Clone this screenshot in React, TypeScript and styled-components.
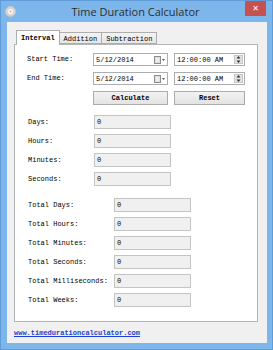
import React from "react";
import styled, { createGlobalStyle } from "styled-components";

const GlobalStyle = createGlobalStyle`
  html, body {
    margin: 0;
    padding: 0;
    width: 273px;
    height: 350px;
    overflow: hidden;
  }
  * { box-sizing: border-box; }
`;

const MONO = `"Liberation Mono", "DejaVu Sans Mono", monospace`;

const durations = ["Days", "Hours", "Minutes", "Seconds"];
const totals = [
  "Total Days",
  "Total Hours",
  "Total Minutes",
  "Total Seconds",
  "Total Milliseconds",
  "Total Weeks",
];

const CalendarIcon = () => (
  <svg width="12" height="8" viewBox="0 0 12 8">
    <rect x="0.5" y="0.5" width="6" height="7" fill="#d8d8d8" stroke="#8c8c8c" />
    <rect x="1.5" y="1.5" width="4" height="5" fill="#ececec" />
    <path d="M8 3 L11 3 L9.5 5 Z" fill="#555" />
  </svg>
);

const SpinIcon = () => (
  <svg width="5" height="9" viewBox="0 0 5 9">
    <path d="M0.5 3.5 L4.5 3.5 L2.5 1 Z" fill="#333" />
    <path d="M0.5 5.5 L4.5 5.5 L2.5 8 Z" fill="#333" />
  </svg>
);

const AppIcon = () => (
  <svg width="11" height="11" viewBox="0 0 11 11">
    <circle cx="5.5" cy="5.5" r="5" fill="#d6d6d6" stroke="#c4c4c4" />
    <circle cx="5.5" cy="5.5" r="2.6" fill="#f6f6f6" />
    <circle cx="5.5" cy="5.5" r="1" fill="#e4a0a0" />
  </svg>
);

const DateTimeRow = ({ label }: { label: string }) => (
  <>
    <Label>{label}</Label>
    <EditBox>
      <span>5/12/2014</span>
      <CalendarIcon />
    </EditBox>
    <EditBox>
      <span>12:00:00 AM</span>
      <Spinner>
        <SpinIcon />
      </Spinner>
    </EditBox>
  </>
);

const App = () => {
  return (
    <Window>
      <GlobalStyle />
      <TitleBar>
        <IconSlot>
          <AppIcon />
        </IconSlot>
        <Title>Time Duration Calculator</Title>
        <CloseButton>✕</CloseButton>
      </TitleBar>
      <Frame>
        <Client>
          <Tabs>
            <TabStrip>
              <Tab $active>Interval</Tab>
              <Tab>Addition</Tab>
              <Tab>Subtraction</Tab>
            </TabStrip>
            <Panel>
              <TopGrid>
                <DateTimeRow label="Start Time:" />
                <DateTimeRow label="End Time:" />
                <span />
                <Button>Calculate</Button>
                <Button>Reset</Button>
              </TopGrid>

              <ResultGrid $labelWidth={66} $top={11}>
                {durations.map((d) => (
                  <React.Fragment key={d}>
                    <Label>{d}:</Label>
                    <ValueBox>0</ValueBox>
                  </React.Fragment>
                ))}
              </ResultGrid>

              <ResultGrid $labelWidth={86} $top={12}>
                {totals.map((t) => (
                  <React.Fragment key={t}>
                    <Label>{t}:</Label>
                    <ValueBox>0</ValueBox>
                  </React.Fragment>
                ))}
              </ResultGrid>
            </Panel>
          </Tabs>
          <SiteLink href="#">www.timedurationcalculator.com</SiteLink>
        </Client>
      </Frame>
    </Window>
  );
};
export default App;

// styled-components -----------------
const Window = styled.div`
  width: 273px;
  height: 350px;
  background: #7db6ea;
  display: flex;
  flex-direction: column;
  border: 1px solid #5f9bd6;
`;

const TitleBar = styled.div`
  height: 21px;
  display: grid;
  grid-template-columns: 1fr auto 1fr;
  align-items: center;
  padding: 0 6px 0 4px;
`;

const IconSlot = styled.div`
  display: flex;
  align-items: center;
`;

const Title = styled.div`
  font-family: "Open Sans", "Liberation Sans", sans-serif;
  font-size: 11px;
  color: #2e2e2e;
  padding-bottom: 1px;
`;

const CloseButton = styled.div`
  justify-self: end;
  align-self: start;
  width: 21px;
  height: 15px;
  background: #c7514f;
  color: #fff;
  font-family: "DejaVu Sans", sans-serif;
  font-size: 8px;
  font-weight: bold;
  display: flex;
  align-items: center;
  justify-content: center;
`;

const Frame = styled.div`
  flex: 1;
  display: flex;
  padding: 0 5px 6px 6px;
`;

const Client = styled.div`
  flex: 1;
  background: #f0f0f0;
  padding: 8px 0 0 7px;
  display: flex;
  flex-direction: column;
  font-family: ${MONO};
  font-size: 7px;
  color: #000;
`;

const Tabs = styled.div`
  width: 244px;
  display: flex;
  flex-direction: column;
`;

const TabStrip = styled.div`
  display: flex;
  align-items: flex-end;
  height: 14px;
  padding-left: 2px;
`;

const Tab = styled.div<{ $active?: boolean }>`
  position: relative;
  z-index: ${(p) => (p.$active ? 2 : 1)};
  height: ${(p) => (p.$active ? "15px" : "12px")};
  margin-bottom: ${(p) => (p.$active ? "-1px" : "0")};
  margin-left: ${(p) => (p.$active ? "0" : "-1px")};
  padding: 0 4px;
  display: flex;
  align-items: center;
  padding-top: ${(p) => (p.$active ? "0" : "1px")};
  border: 1px solid #adadad;
  border-bottom: ${(p) => (p.$active ? "none" : "1px solid #adadad")};
  background: ${(p) =>
    p.$active ? "#fff" : "linear-gradient(#f3f3f3, #e6e6e6)"};
  font-weight: ${(p) => (p.$active ? "bold" : "normal")};
`;

const Panel = styled.div`
  height: 278px;
  background: #fff;
  border: 1px solid #b4b4b4;
  padding: 8px 0 0 12px;
`;

const TopGrid = styled.div`
  display: grid;
  grid-template-columns: 60px 75px 71px;
  grid-auto-rows: 13px;
  column-gap: 6px;
  row-gap: 6px;
  align-items: center;
  & > :nth-child(n + 8) {
    margin-top: 1px;
  }
`;

const Label = styled.div`
  white-space: nowrap;
  line-height: 13px;
`;

const EditBox = styled.div`
  height: 13px;
  border: 1px solid #abadb3;
  background: #fff;
  display: flex;
  align-items: center;
  justify-content: space-between;
  padding: 0 1px 0 2px;
  white-space: nowrap;
`;

const Spinner = styled.div`
  width: 9px;
  height: 9px;
  background: #e4e4e4;
  border: 1px solid #c6c6c6;
  display: flex;
  align-items: center;
  justify-content: center;
`;

const Button = styled.div`
  height: 14px;
  border: 1px solid #acacac;
  background: linear-gradient(#f2f2f2, #e3e3e3);
  display: flex;
  align-items: center;
  justify-content: center;
  font-weight: bold;
`;

const ResultGrid = styled.div<{ $labelWidth: number; $top: number }>`
  margin-top: ${(p) => p.$top}px;
  display: grid;
  grid-template-columns: ${(p) => p.$labelWidth}px 77px;
  grid-auto-rows: 14px;
  row-gap: 5px;
  align-items: center;
  padding-left: 1px;
`;

const ValueBox = styled.div`
  height: 14px;
  border: 1px solid #c4c4c4;
  background: #f0f0f0;
  padding-left: 2px;
  line-height: 12px;
`;

const SiteLink = styled.a`
  margin-top: 7px;
  color: #1c3fd1;
  text-decoration: underline;
  font-weight: bold;
  align-self: flex-start;
`;
